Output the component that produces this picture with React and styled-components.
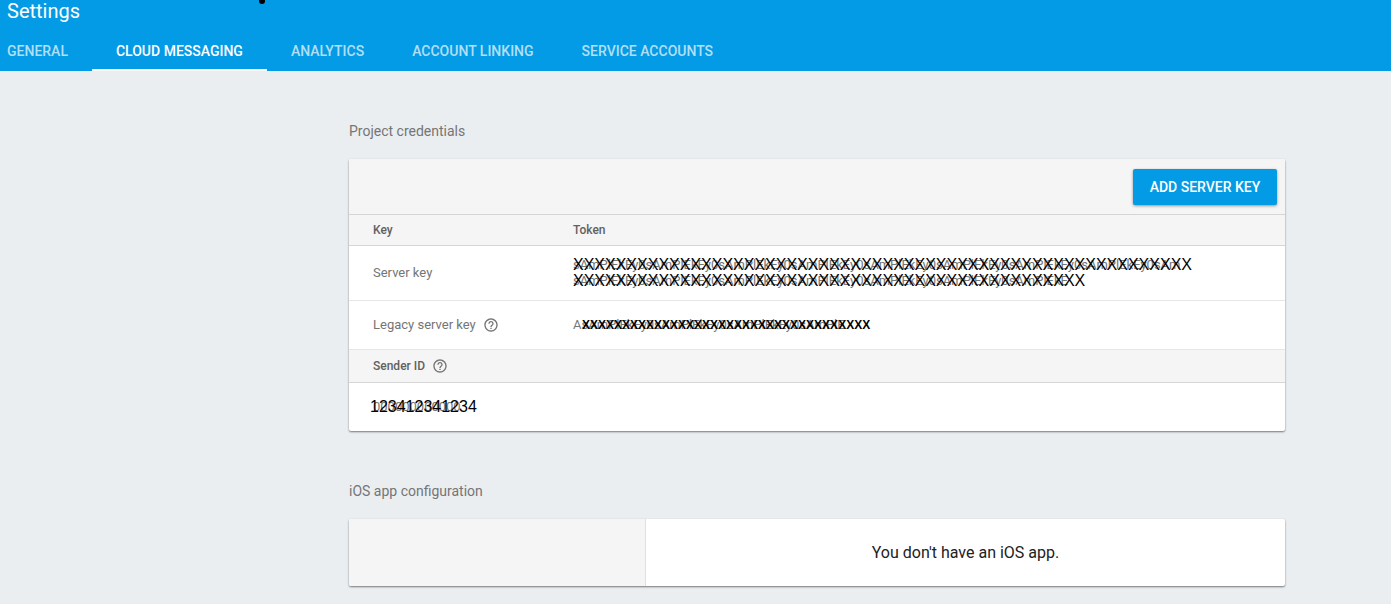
import React from "react";
import styled, { createGlobalStyle } from "styled-components";
import { MdHelpOutline } from "react-icons/md";

const GlobalStyle = createGlobalStyle`
  * { box-sizing: border-box; }
  body {
    margin: 0;
    background: #eaeef1;
    font-family: Roboto, "Liberation Sans", sans-serif;
    color: #757575;
  }
`;

const Header = styled.header`
  position: relative;
  background: #039be5;
  padding-left: 7px;
`;

const Marker = styled.span`
  position: absolute;
  top: -2px;
  left: 259px;
  width: 6px;
  height: 6px;
  border-radius: 50%;
  background: #000;
`;

const Title = styled.h1`
  margin: 0;
  color: #fff;
  font-size: 20px;
  font-weight: 400;
  line-height: 23px;
`;

const Tabs = styled.nav`
  display: flex;
`;

const Tab = styled.a`
  height: 48px;
  padding: 4px 24px 0;
  border-bottom: 2px solid ${(p) => (p.$active ? "#fff" : "transparent")};
  color: ${(p) => (p.$active ? "#fff" : "rgba(255, 255, 255, 0.7)")};
  font-size: 14px;
  font-weight: 500;
  line-height: 48px;
  white-space: nowrap;
  text-decoration: none;
  &:first-child { padding-left: 0; }
`;

const Main = styled.main`
  padding: 48px 106px 17px 349px;
`;

const Section = styled.section`
  & + & { margin-top: 48px; }
`;

const SectionTitle = styled.h2`
  margin: 0;
  padding-bottom: 16px;
  font-size: 14px;
  font-weight: 400;
  line-height: 24px;
`;

const Card = styled.div`
  overflow: hidden;
  border-radius: 2px;
  background: #fff;
  box-shadow: 0 1px 2px rgba(0, 0, 0, 0.5);
`;

const Toolbar = styled.div`
  display: flex;
  align-items: center;
  justify-content: flex-end;
  height: 56px;
  padding-right: 8px;
  border-bottom: 1px solid #d6d6d6;
  background: #f5f5f5;
`;

const PrimaryButton = styled.button`
  min-width: 144px;
  height: 36px;
  padding: 0 16px;
  border: 0;
  border-radius: 2px;
  background: #039be5;
  box-shadow: 0 1px 3px rgba(0, 0, 0, 0.4);
  color: #fff;
  font: 500 14px Roboto, sans-serif;
`;

const Table = styled.table`
  width: 100%;
  border-spacing: 0;
  table-layout: fixed;
`;

const HeadCell = styled.th`
  height: ${(p) => p.$height}px;
  width: ${(p) => (p.$key ? "224px" : "auto")};
  padding: 0 0 0 ${(p) => (p.$key ? 24 : 0)}px;
  border-bottom: 1px solid #d6d6d6;
  background: #f5f5f5;
  color: #616161;
  font-size: 12px;
  font-weight: 500;
  text-align: left;
`;

const Cell = styled.td`
  height: ${(p) => p.$height}px;
  padding: 0 0 0 ${(p) => (p.$key ? 24 : 0)}px;
  border-bottom: ${(p) => (p.$last ? "0" : "1px solid #e6e6e6")};
  font-size: 13px;
  line-height: 16px;
`;

const WithHelp = styled.span`
  display: flex;
  align-items: center;
  gap: 7px;
`;

const Masked = styled.span`
  position: relative;
  display: block;
  white-space: nowrap;
`;

const Mask = styled.span`
  position: absolute;
  top: 0;
  left: ${(p) => p.$left}px;
  color: #000;
  font-family: "Liberation Sans", sans-serif;
  font-size: ${(p) => p.$size}px;
  font-weight: ${(p) => (p.$bold ? 700 : 400)};
  line-height: 16px;
`;

const Split = styled(Card)`
  display: flex;
  min-height: 67px;
`;

const AppList = styled.div`
  width: 297px;
  border-right: 1px solid #e0e0e0;
  background: #f5f5f5;
`;

const EmptyMessage = styled.p`
  flex: 1;
  margin: 0;
  color: #212121;
  font-size: 16px;
  line-height: 67px;
  text-align: center;
`;

const tabs = ["GENERAL", "CLOUD MESSAGING", "ANALYTICS", "ACCOUNT LINKING", "SERVICE ACCOUNTS"];

// Dummy values only; the masks are drawn over them.
const filler = (length) => "sAmPlEkEy0".repeat(10).slice(0, length);

function MaskedValue({ value, count, text, left = 0, size = 16, bold = false }) {
  return (
    <Masked>
      {value}
      <Mask $left={left} $size={size} $bold={bold}>{text || "X".repeat(count)}</Mask>
    </Masked>
  );
}

export default function App() {
  return (
    <>
      <GlobalStyle />
      <Header>
        <Marker />
        <Title>Settings</Title>
        <Tabs>
          {tabs.map((t) => (
            <Tab key={t} href="#" $active={t === "CLOUD MESSAGING"}>{t}</Tab>
          ))}
        </Tabs>
      </Header>
      <Main>
        <Section>
          <SectionTitle>Project credentials</SectionTitle>
          <Card>
            <Toolbar>
              <PrimaryButton type="button">ADD SERVER KEY</PrimaryButton>
            </Toolbar>
            <Table>
              <thead>
                <tr>
                  <HeadCell $key $height={31} scope="col">Key</HeadCell>
                  <HeadCell $height={31} scope="col">Token</HeadCell>
                </tr>
              </thead>
              <tbody>
                <tr>
                  <Cell $key $height={55}>Server key</Cell>
                  <Cell $height={55}>
                    <MaskedValue value={filler(83)} count={58} />
                    <MaskedValue value={filler(68)} count={48} />
                  </Cell>
                </tr>
                <tr>
                  <Cell $key $height={49}>
                    <WithHelp>Legacy server key <MdHelpOutline size={16} /></WithHelp>
                  </Cell>
                  <Cell $height={49}>
                    <MaskedValue value={"A" + filler(36)} count={36} left={9} size={12} bold />
                  </Cell>
                </tr>
              </tbody>
            </Table>
            <Table>
              <thead>
                <tr>
                  <HeadCell $key $height={33} scope="col">
                    <WithHelp>Sender ID <MdHelpOutline size={16} color="#757575" /></WithHelp>
                  </HeadCell>
                  <HeadCell $height={33} />
                </tr>
              </thead>
              <tbody>
                <tr>
                  <Cell $key $last $height={48}>
                    <MaskedValue value="000000000000" text="123412341234" left={-3} />
                  </Cell>
                  <Cell $last $height={48} />
                </tr>
              </tbody>
            </Table>
          </Card>
        </Section>
        <Section>
          <SectionTitle>iOS app configuration</SectionTitle>
          <Split>
            <AppList />
            <EmptyMessage>You don't have an iOS app.</EmptyMessage>
          </Split>
        </Section>
      </Main>
    </>
  );
}
